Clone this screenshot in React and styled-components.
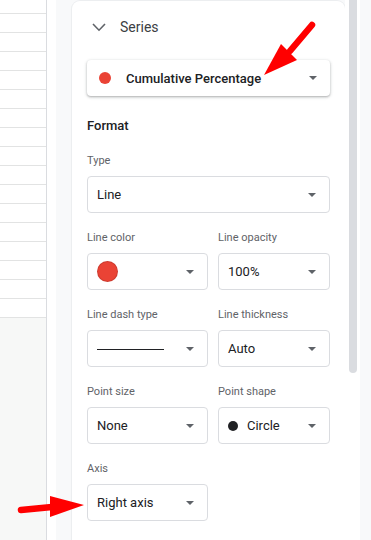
import styled, { createGlobalStyle } from 'styled-components';

const GlobalStyle = createGlobalStyle`
  html, body {
    margin: 0;
    padding: 0;
    overflow: hidden;
    background: #ffffff;
  }
  * {
    box-sizing: border-box;
  }
`;

const ROW_COUNT = 16;

export default function App() {
  return (
    <Page>
      <GlobalStyle />
      <SheetColumn>
        <SheetRow $height={14} />
        {Array.from({ length: ROW_COUNT }).map((_, i) => (
          <SheetRow key={i} $height={19} />
        ))}
      </SheetColumn>

      <Gutter />
      <PanelBody>
        <Card>
          <SectionHeader>
            <Chevron width="14" height="9" viewBox="0 0 14 9">
              <polyline
                points="1,1 7,7.2 13,1"
                fill="none"
                stroke="#5f6368"
                strokeWidth="1.6"
              />
            </Chevron>
            <SectionTitle>Series</SectionTitle>
          </SectionHeader>

          <SeriesPicker>
            <Dot $size={12} $color="#ea4335" />
            <SeriesName>Cumulative Percentage</SeriesName>
            <Caret />
          </SeriesPicker>

          <GroupTitle>Format</GroupTitle>

          <Field>
            <Label>Type</Label>
            <Select>
              <SelectValue>Line</SelectValue>
              <Caret />
            </Select>
          </Field>

          <FieldPair>
            <Field>
              <Label>Line color</Label>
              <Select>
                <Swatch />
                <Caret />
              </Select>
            </Field>
            <Field>
              <Label>Line opacity</Label>
              <Select>
                <SelectValue>100%</SelectValue>
                <Caret />
              </Select>
            </Field>
          </FieldPair>

          <FieldPair>
            <Field>
              <Label>Line dash type</Label>
              <Select>
                <DashSample />
                <Caret />
              </Select>
            </Field>
            <Field>
              <Label>Line thickness</Label>
              <Select>
                <SelectValue>Auto</SelectValue>
                <Caret />
              </Select>
            </Field>
          </FieldPair>

          <FieldPair>
            <Field>
              <Label>Point size</Label>
              <Select>
                <SelectValue>None</SelectValue>
                <Caret />
              </Select>
            </Field>
            <Field>
              <Label>Point shape</Label>
              <Select>
                <SelectValue>
                  <Dot $size={10} $color="#202124" />
                  Circle
                </SelectValue>
                <Caret />
              </Select>
            </Field>
          </FieldPair>

          <FieldPair>
            <Field>
              <Label>Axis</Label>
              <Select>
                <SelectValue>Right axis</SelectValue>
                <Caret />
              </Select>
            </Field>
          </FieldPair>
        </Card>
      </PanelBody>

      <ScrollTrack>
        <ScrollThumb />
      </ScrollTrack>
      <RightStrip />

      <Annotations width="371" height="540" viewBox="0 0 371 540">
        <line
          x1="312"
          y1="25"
          x2="290"
          y2="51"
          stroke="#ff0000"
          strokeWidth="6.5"
          strokeLinecap="round"
        />
        <polygon points="264,75 281,44 297,60" fill="#ff0000" />
        <line
          x1="21"
          y1="510"
          x2="52"
          y2="507"
          stroke="#ff0000"
          strokeWidth="6.5"
          strokeLinecap="round"
        />
        <polygon points="84,505 50,496 50,517" fill="#ff0000" />
      </Annotations>
    </Page>
  );
}

const Page = styled.div`
  position: relative;
  display: flex;
  width: 371px;
  height: 540px;
  overflow: hidden;
  font-family: Roboto, 'Liberation Sans', Arial, sans-serif;
  color: #202124;
`;

const SheetColumn = styled.div`
  width: 47px;
  flex-shrink: 0;
  display: flex;
  flex-direction: column;
  background: #f7f8f7;
  border-right: 1px solid #dadce0;
`;

const SheetRow = styled.div`
  height: ${(p) => p.$height}px;
  background: #ffffff;
  border-bottom: 1px solid #e2e3e3;
`;

const Gutter = styled.div`
  width: 9px;
  flex-shrink: 0;
  background: #ffffff;
`;

const PanelBody = styled.div`
  width: 289px;
  flex-shrink: 0;
  padding: 1px 0 0 16px;
  background: #f8f9fa;
`;

const Card = styled.div`
  width: 273px;
  height: 600px;
  padding: 0 15px;
  background: #ffffff;
  border-radius: 8px 8px 0 0;
  box-shadow: 0 0 0 1px #eceef0, 0 1px 2px rgba(60, 64, 67, 0.08);
`;

const SectionHeader = styled.div`
  height: 52px;
  display: flex;
  align-items: center;
  padding-left: 5px;
`;

const Chevron = styled.svg`
  display: block;
  margin-top: 1px;
`;

const SectionTitle = styled.span`
  margin-left: 14px;
  font-size: 14px;
  color: #3c4043;
`;

const SeriesPicker = styled.div`
  margin-top: 7px;
  height: 36px;
  display: flex;
  align-items: center;
  padding: 0 13px 0 12px;
  border-radius: 4px;
  box-shadow: 0 1px 2px rgba(60, 64, 67, 0.3), 0 1px 3px 1px rgba(60, 64, 67, 0.12);
`;

const SeriesName = styled.span`
  flex: 1;
  margin-left: 15px;
  font-size: 13px;
  font-weight: 500;
  color: #202124;
`;

const Dot = styled.span`
  display: inline-block;
  flex-shrink: 0;
  width: ${(p) => p.$size}px;
  height: ${(p) => p.$size}px;
  border-radius: 50%;
  background: ${(p) => p.$color};
`;

const Caret = styled.span`
  flex-shrink: 0;
  width: 0;
  height: 0;
  border-left: 4px solid transparent;
  border-right: 4px solid transparent;
  border-top: 4px solid #5f6368;
`;

const GroupTitle = styled.div`
  margin-top: 20px;
  height: 20px;
  line-height: 20px;
  font-size: 13px;
  font-weight: 500;
  color: #202124;
`;

const FieldPair = styled.div`
  display: grid;
  grid-template-columns: 121px 112px;
  column-gap: 10px;
  margin-top: 17px;
`;

const Field = styled.div`
  display: flex;
  flex-direction: column;
  margin-top: ${(p) => (p.$first ? 17 : 0)}px;
  ${GroupTitle} + & {
    margin-top: 17px;
  }
`;

const Label = styled.div`
  height: 16px;
  line-height: 16px;
  margin-bottom: 7px;
  font-size: 11px;
  color: #5f6368;
`;

const Select = styled.div`
  height: 37px;
  display: flex;
  align-items: center;
  justify-content: space-between;
  padding: 0 13px 0 9px;
  border: 1px solid #dadce0;
  border-radius: 4px;
`;

const SelectValue = styled.span`
  display: flex;
  align-items: center;
  gap: 9px;
  font-size: 13px;
  color: #202124;
`;

const Swatch = styled.span`
  width: 21px;
  height: 21px;
  border-radius: 50%;
  background: #ea4335;
  border: 1px solid rgba(0, 0, 0, 0.12);
`;

const DashSample = styled.span`
  width: 67px;
  height: 1.6px;
  background: #202124;
  margin-top: 2px;
`;

const ScrollTrack = styled.div`
  width: 15px;
  flex-shrink: 0;
  padding: 0 3px 0 4px;
  background: #ffffff;
`;

const ScrollThumb = styled.div`
  height: 373px;
  background: #dadce0;
  border-radius: 0 0 4px 4px;
`;

const RightStrip = styled.div`
  flex: 1;
  background: #f8f9fa;
`;

const Annotations = styled.svg`
  position: absolute;
  left: 0;
  top: 0;
  pointer-events: none;
`;
